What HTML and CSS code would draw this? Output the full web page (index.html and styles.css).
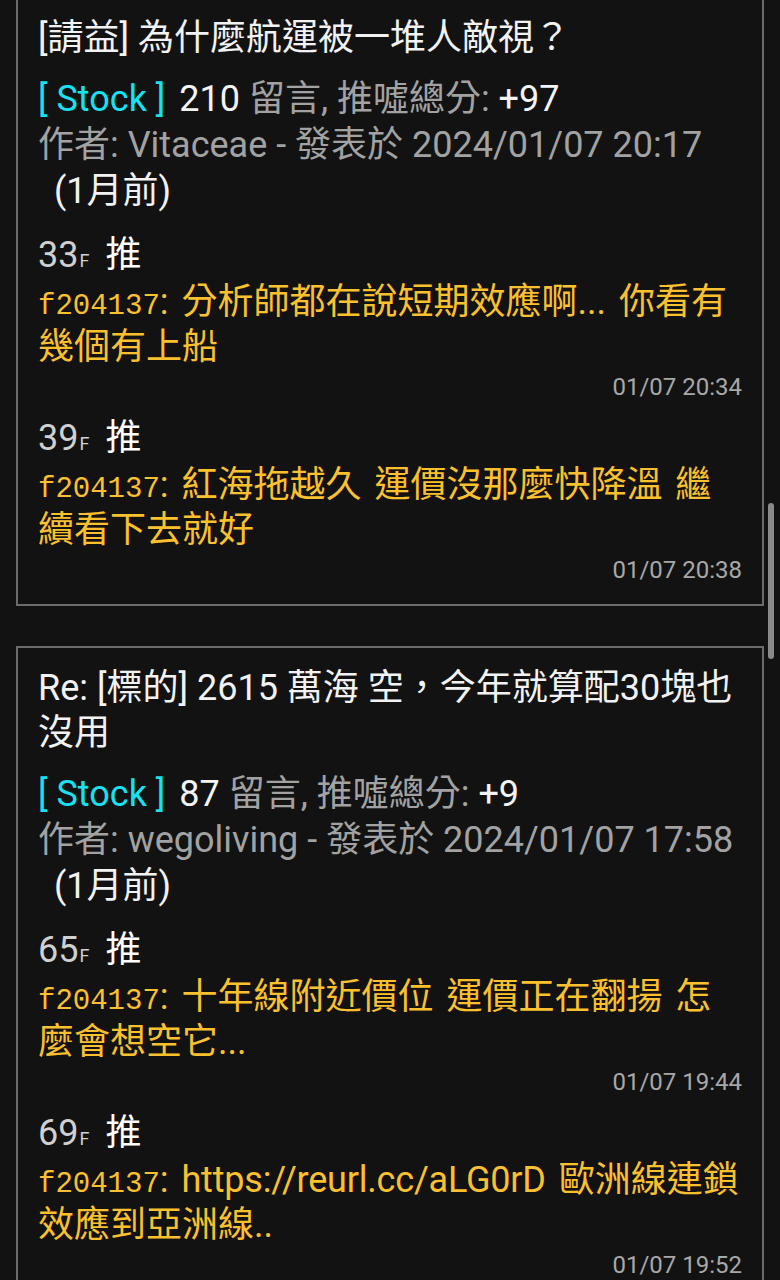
FILE: index.html
```html
<!DOCTYPE html>
<html lang="zh-Hant">
<head>
<meta charset="utf-8">
<title>PTT Stock</title>
<link rel="stylesheet" href="styles.css">
</head>
<body>
<div class="feed">
  <article class="post">
    <h2 class="title">[請益] 為什麼航運被一堆人敵視？</h2>
    <div class="meta">
      <div class="meta-line"><span class="board">[ Stock ]</span> <span class="num">210</span> 留言, 推噓總分: <span class="num">+97</span></div>
      <div class="meta-line">作者: Vitaceae - 發表於 2024/01/07 20:17</div>
      <div class="meta-line ago">(1月前)</div>
    </div>
    <ul class="comments">
      <li class="comment">
        <div class="c-head"><span class="floor">33<span class="floor-f">F</span></span><span class="tag">推</span></div>
        <p class="c-body"><span class="uid">f204137</span>: 分析師都在說短期效應啊... 你看有幾個有上船</p>
        <div class="c-time">01/07 20:34</div>
      </li>
      <li class="comment">
        <div class="c-head"><span class="floor">39<span class="floor-f">F</span></span><span class="tag">推</span></div>
        <p class="c-body"><span class="uid">f204137</span>: 紅海拖越久 運價沒那麼快降溫 繼續看下去就好</p>
        <div class="c-time">01/07 20:38</div>
      </li>
    </ul>
  </article>

  <article class="post">
    <h2 class="title">Re: [標的] 2615 萬海 空，今年就算配30塊也沒用</h2>
    <div class="meta">
      <div class="meta-line"><span class="board">[ Stock ]</span> <span class="num">87</span> 留言, 推噓總分: <span class="num">+9</span></div>
      <div class="meta-line">作者: wegoliving - 發表於 2024/01/07 17:58</div>
      <div class="meta-line ago">(1月前)</div>
    </div>
    <ul class="comments">
      <li class="comment">
        <div class="c-head"><span class="floor">65<span class="floor-f">F</span></span><span class="tag">推</span></div>
        <p class="c-body"><span class="uid">f204137</span>: 十年線附近價位 運價正在翻揚 怎麼會想空它...</p>
        <div class="c-time">01/07 19:44</div>
      </li>
      <li class="comment">
        <div class="c-head"><span class="floor">69<span class="floor-f">F</span></span><span class="tag">推</span></div>
        <p class="c-body"><span class="uid">f204137</span>: <span class="link">https://reurl.cc/aLG0rD</span> 歐洲線連鎖效應到亞洲線..</p>
        <div class="c-time">01/07 19:52</div>
      </li>
    </ul>
  </article>
</div>
<div class="scrollbar"></div>
</body>
</html>
```

FILE: styles.css
```css
html, body {
  margin: 0;
  padding: 0;
  background: #121212;
  overflow: hidden;
}

body {
  font-family: Roboto, "Noto Sans CJK TC", sans-serif;
  color: #f2f2f2;
  font-size: 36px;
  line-height: 45px;
}

.feed {
  display: flex;
  flex-direction: column;
  gap: 40px;
  padding: 0 16px;
  margin-top: -4px;
}

.post {
  border: 2px solid #6b6b6b;
  padding: 18px 20px 19px;
}

.title {
  margin: 0;
  font-size: 36px;
  font-weight: 400;
  line-height: 45px;
  color: #f2f2f2;
}

.meta {
  margin-top: 15px;
  color: #a2a2a2;
}

.meta-line {
  line-height: 46px;
  white-space: nowrap;
}

.board {
  color: #16e2f2;
  margin-right: 5px;
}

.num {
  color: #f4f4f4;
}

.ago {
  color: #f2f2f2;
  padding-left: 16px;
}

.comments {
  list-style: none;
  margin: 19px 0 0;
  padding: 0;
  display: flex;
  flex-direction: column;
  gap: 14px;
}

.c-head {
  display: flex;
  align-items: baseline;
  gap: 16px;
  line-height: 45px;
  margin-bottom: 2px;
}

.floor {
  color: #d0d0d0;
}

.floor-f {
  font-size: 18px;
  line-height: 18px;
  margin-left: 1px;
}

.tag {
  color: #ffffff;
}

.c-body {
  margin: 0;
  color: #fbc02d;
  line-height: 45px;
  word-spacing: 4px;
}

.uid {
  font-family: "Liberation Mono", monospace;
  font-size: 29px;
  line-height: 29px;
  word-spacing: 0;
}

.link {
  letter-spacing: -0.2px;
}

.c-time {
  margin-top: 2px;
  text-align: right;
  font-size: 24px;
  line-height: 30px;
  color: #a8a8a8;
}

.scrollbar {
  position: fixed;
  left: 768px;
  top: 503px;
  width: 6px;
  height: 156px;
  border-radius: 3px;
  background: #8a8a8a;
}
```
